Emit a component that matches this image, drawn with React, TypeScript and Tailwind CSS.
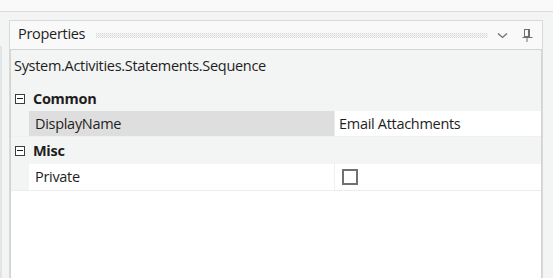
import React from 'react'

function Chevron() {
  return (
    <svg width="11" height="7" viewBox="0 0 11 7" className="block">
      <path d="M1 1.5 L5.5 5.5 L10 1.5" fill="none" stroke="#6f6f6f" strokeWidth="1.3" />
    </svg>
  )
}

function Pin() {
  return (
    <svg width="11" height="14" viewBox="0 0 11 14" className="block">
      <rect x="2.5" y="1.5" width="5" height="7" fill="none" stroke="#6f6f6f" />
      <rect x="6" y="1" width="2" height="8" fill="#6f6f6f" />
      <path d="M0.5 9.5 H10.5" stroke="#6f6f6f" />
      <path d="M5 10 V14" stroke="#6f6f6f" />
    </svg>
  )
}

function Grip() {
  return (
    <svg className="block flex-1 h-[5px]">
      <defs>
        <pattern id="dots" width="2" height="2" patternUnits="userSpaceOnUse">
          <rect x="0" y="0" width="1" height="1" fill="#d2d2d2" />
          <rect x="1" y="1" width="1" height="1" fill="#e4e4e4" />
        </pattern>
      </defs>
      <rect width="100%" height="100%" fill="url(#dots)" />
    </svg>
  )
}

function Minus() {
  return (
    <div className="w-[10px] h-[10px] border border-[#3c3c3c] bg-white flex items-center justify-center">
      <div className="w-[6px] h-[1px] bg-[#1e1e1e]" />
    </div>
  )
}

function GroupRow({ label, h }: { label: string; h: string }) {
  return (
    <div className={`flex items-center ${h}`}>
      <div className="w-[18px] pl-[4px] flex items-center">
        <Minus />
      </div>
      <span className="font-bold pl-[4px]">{label}</span>
    </div>
  )
}

export default function App() {
  return (
    <div className="min-h-screen bg-[#f3f4f4] font-['Segoe_UI','Open_Sans',sans-serif] text-[14.5px] tracking-[-0.3px] text-[#1e1e1e]">
      <div className="h-[12px] bg-[#f9f9f9] border-b border-[#dcdcdc]" />
      <div className="flex pt-[8px]">
        <div className="w-[2px] mt-[26px] bg-[#e3e4e4]" />
        <div className="ml-[7px] w-[534px] h-[258px] border-t border-x border-[#d9d9d9] bg-[#f9f9f9] flex flex-col">
          <div className="h-[28px] flex items-center pl-[8px] pr-[9px]">
            <span className="leading-none pb-[1px]">Properties</span>
            <div className="flex-1 flex pl-[11px] pr-[9px]">
              <Grip />
            </div>
            <Chevron />
            <div className="pl-[14px]">
              <Pin />
            </div>
          </div>
          <div className="flex-1 border-t border-x border-[#d3d3d3] bg-white flex flex-col">
            <div className="h-[36px] bg-[#f3f4f4] flex items-center pl-[3px] pb-[4px]">
              System.Activities.Statements.Sequence
            </div>
            <div className="bg-[#f3f4f4]">
              <GroupRow label="Common" h="h-[25px]" />
              <div className="flex h-[26px] border-b border-[#f0f0f0]">
                <div className="w-[18px]" />
                <div className="w-[305px] bg-[#dedede] flex items-center pl-[6px]">DisplayName</div>
                <div className="w-[1px] bg-[#ececec]" />
                <div className="flex-1 bg-white flex items-center pl-[4px]">Email Attachments</div>
              </div>
              <GroupRow label="Misc" h="h-[27px]" />
              <div className="flex h-[27px] border-b border-[#ececec]">
                <div className="w-[18px]" />
                <div className="w-[305px] bg-white flex items-center pl-[6px]">Private</div>
                <div className="w-[1px] bg-[#efefef]" />
                <div className="flex-1 bg-white flex items-center pl-[7px]">
                  <div className="w-[16px] h-[16px] border-2 border-[#717171] bg-white" />
                </div>
              </div>
            </div>
            <div className="flex-1 bg-white" />
          </div>
        </div>
      </div>
    </div>
  )
}
